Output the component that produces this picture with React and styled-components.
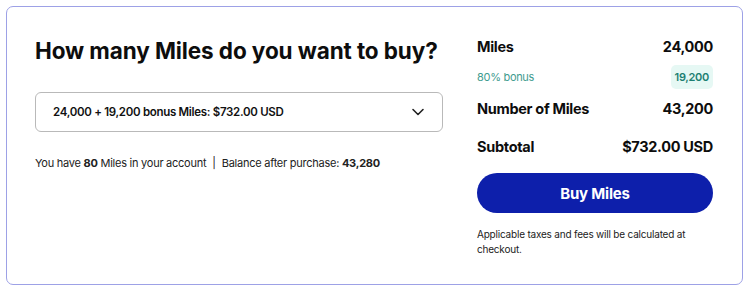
import React from 'react'
import styled, { createGlobalStyle } from 'styled-components'

const GlobalStyle = createGlobalStyle`
  body {
    margin: 0;
    padding: 6px;
    font-family: Inter, "Open Sans", sans-serif;
    color: #111;
    background: #fff;
  }
`

const Card = styled.section`
  width: 737px;
  height: 279px;
  box-sizing: border-box;
  border: 1px solid #9da1e6;
  border-radius: 7px;
  padding: 28px 29px 0 28px;
  display: flex;
  justify-content: space-between;
`

const LeftCol = styled.div`
  width: 408px;
  display: flex;
  flex-direction: column;
`

const Title = styled.h2`
  margin: 0;
  font-size: 22.5px;
  line-height: 31px;
  font-weight: 700;
  letter-spacing: -0.1px;
  color: #0d0d0d;
`

const Select = styled.div`
  margin-top: 26px;
  height: 40px;
  box-sizing: border-box;
  border: 1px solid #b9b9b9;
  border-radius: 6px;
  padding: 0 17px 0 17px;
  display: flex;
  align-items: center;
  justify-content: space-between;
  font-size: 11.5px;
  letter-spacing: -0.3px;
  font-weight: 600;
  color: #111;
`

const Info = styled.p`
  margin: 24px 0 0;
  font-size: 11px;
  letter-spacing: -0.25px;
  color: #222;
  b {
    font-weight: 700;
  }
`

const Sep = styled.span`
  margin: 0 6px;
`

const RightCol = styled.div`
  width: 236px;
  display: flex;
  flex-direction: column;
`

const Row = styled.div`
  display: flex;
  justify-content: space-between;
  align-items: center;
  height: ${p => p.$h}px;
  font-size: ${p => (p.$small ? '11px' : '14.5px')};
  letter-spacing: -0.3px;
  font-weight: ${p => (p.$small ? 400 : 700)};
  color: ${p => (p.$small ? '#3f9c8f' : '#0d0d0d')};
`

const Chip = styled.span`
  background: #e6f8f4;
  color: #1d7f72;
  font-weight: 600;
  font-size: 11px;
  letter-spacing: -0.3px;
  border-radius: 5px;
  padding: 5px 4px;
`

const BuyButton = styled.button`
  margin-top: 0;
  height: 40px;
  border: none;
  border-radius: 20px;
  background: #0d1fab;
  color: #fff;
  font-family: inherit;
  font-size: 15px;
  letter-spacing: -0.2px;
  font-weight: 700;
  cursor: pointer;
`

const Note = styled.p`
  margin: 14px 0 0;
  font-size: 10px;
  letter-spacing: -0.2px;
  line-height: 15px;
  color: #222;
`

function Chevron() {
  return (
    <svg width="14" height="14" viewBox="0 0 14 14" fill="none">
      <path d="M2 4.5 L7 9.5 L12 4.5" stroke="#222" strokeWidth="1.6" strokeLinecap="round" strokeLinejoin="round" />
    </svg>
  )
}

export default function App() {
  return (
    <>
      <GlobalStyle />
      <Card>
        <LeftCol>
          <Title>How many Miles do you want to buy?</Title>
          <Select>
            <span>24,000 + 19,200 bonus Miles: $732.00 USD</span>
            <Chevron />
          </Select>
          <Info>
            You have <b>80</b> Miles in your account<Sep>|</Sep>Balance after purchase: <b>43,280</b>
          </Info>
        </LeftCol>
        <RightCol>
          <Row $h={22}>
            <span>Miles</span>
            <span>24,000</span>
          </Row>
          <Row $h={40} $small>
            <span>80% bonus</span>
            <Chip>19,200</Chip>
          </Row>
          <Row $h={22}>
            <span>Number of Miles</span>
            <span>43,200</span>
          </Row>
          <Row $h={54}>
            <span>Subtotal</span>
            <span>$732.00 USD</span>
          </Row>
          <BuyButton>Buy Miles</BuyButton>
          <Note>Applicable taxes and fees will be calculated at checkout.</Note>
        </RightCol>
      </Card>
    </>
  )
}
